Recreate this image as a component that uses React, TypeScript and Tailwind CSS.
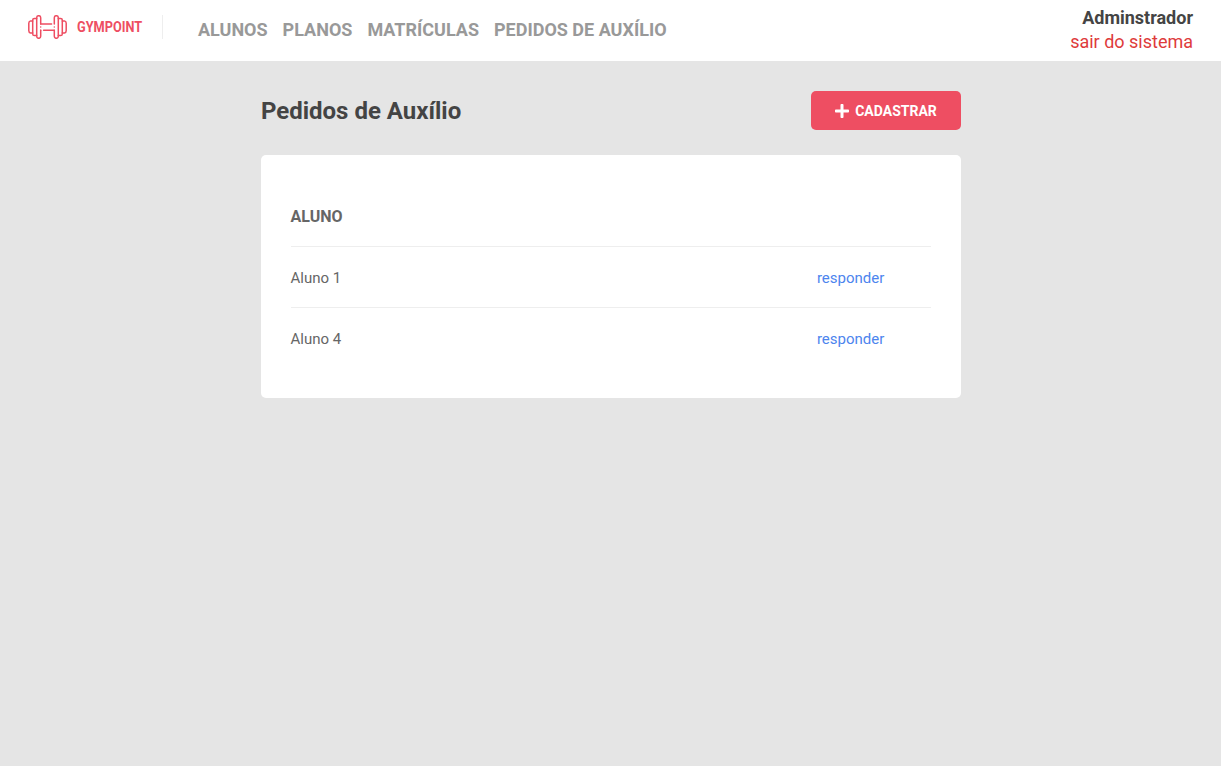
import React from "react";
import { FaPlus } from "react-icons/fa";

function Dumbbell() {
  return (
    <svg
      width="39"
      height="24"
      viewBox="0 0 39 24"
      fill="none"
      stroke="#ee4e62"
      strokeWidth="1.5"
      strokeLinecap="round"
      strokeLinejoin="round"
    >
      <path d="M12.7 9V2.7A2 2 0 0 0 8.7 2.7V21.3A2 2 0 0 0 12.7 21.3V15.2" />
      <path d="M8.7 3.4H6.4Q4.7 3.4 4.7 5.1V18.9Q4.7 20.6 6.4 20.6H8.7" />
      <path d="M4.7 5.9H2.6Q0.8 6.4 0.8 8.3V15.7Q0.8 17.6 2.6 18.1H4.7" />
      <path d="M26.3 9V2.7A2 2 0 0 1 30.3 2.7V21.3A2 2 0 0 1 26.3 21.3V15.2" />
      <path d="M30.3 3.4H32.6Q34.3 3.4 34.3 5.1V18.9Q34.3 20.6 32.6 20.6H30.3" />
      <path d="M34.3 5.9H36.4Q38.2 6.4 38.2 8.3V15.7Q38.2 17.6 36.4 18.1H34.3" />
      <path d="M12.7 9H23.6M15.6 15.2H26.3M12.7 15.2V15.3M12.7 12V12.1M26.3 12V12.1" />
    </svg>
  );
}

const links = ["ALUNOS", "PLANOS", "MATRÍCULAS", "PEDIDOS DE AUXÍLIO"];
const students = ["Aluno 1", "Aluno 4"];

export default function App() {
  return (
    <div className="min-h-screen bg-[#e5e5e5] font-['Roboto',sans-serif] text-[#666]">
      <header className="flex h-[61px] justify-between bg-white px-7">
        <div className="flex">
          <div className="mt-[15px] flex h-6 w-[135px] items-center gap-[10px] border-r border-[#eee]">
            <Dumbbell />
            <span className="origin-left scale-x-[0.91] text-[14px] leading-6 font-bold text-[#ee4e62]">
              GYMPOINT
            </span>
          </div>
          <nav className="mt-[18px] ml-[35px] flex gap-[15px] text-[18px] leading-6 font-bold text-[#999]">
            {links.map((l) => (
              <a key={l}>{l}</a>
            ))}
          </nav>
        </div>
        <div className="pt-[6px] text-right text-[18px] leading-6">
          <strong className="block font-bold text-[#444]">Adminstrador</strong>
          <a className="block text-[#de3b3b]">sair do sistema</a>
        </div>
      </header>
      <main className="mx-auto w-[700px] pt-[30px]">
        <div className="flex h-[39px] items-center justify-between">
          <h1 className="pt-[2px] pl-[0.4px] text-[24px] leading-[39px] font-bold text-[#444]">Pedidos de Auxílio</h1>
          <button className="flex h-[39px] w-[150px] items-center justify-center gap-[5px] rounded-[5px] bg-[#ee4e62] text-[14px] font-bold text-white">
            <FaPlus size={16} />
            <span className="pt-px leading-5">CADASTRAR</span>
          </button>
        </div>
        <section className="mt-[25px] h-[243px] rounded-[5px] bg-white px-[30px] pt-[31px]">
          <div className="h-[61px] border-b border-[#eee] text-[16px] leading-[62px] font-bold">ALUNO</div>
          {students.map((s) => (
            <div
              key={s}
              className="flex h-[61px] border-b border-[#eee] text-[15px] leading-[63px] last:border-b-0"
            >
              <span className="w-[526.4px]">{s}</span>
              <a className="text-[#4d85ee]">responder</a>
            </div>
          ))}
        </section>
      </main>
    </div>
  );
}
